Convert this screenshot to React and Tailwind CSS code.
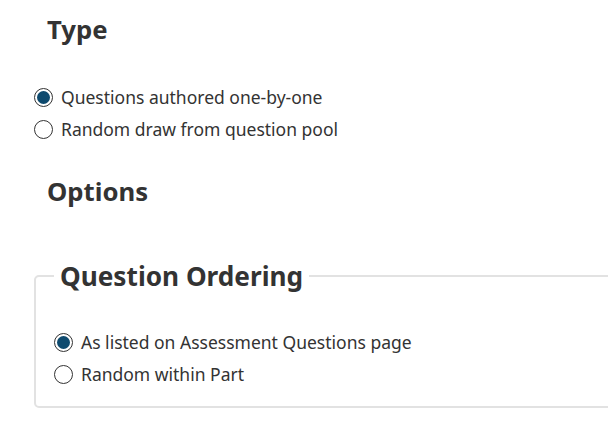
import React from "react";

function Radio({checked, label}) {
    return (
        <label className="flex items-center h-8 text-[17.5px] text-[#333]">
            <span className="flex items-center justify-center w-[19px] h-[19px] rounded-full border border-[#333] bg-white mr-[8px]">
                {checked && <span className="w-[13px] h-[13px] rounded-full bg-[#0e4a6e]"/>}
            </span>
            <span>{label}</span>
        </label>
    );
}

export default function App() {
    return (
        <div className="min-h-screen bg-white pl-[34px] pt-[10px] font-['Noto_Sans',sans-serif] text-[#333]">
            <h2 className="pl-[13px] text-[25.7px] font-bold leading-[40px]">Type</h2>
            <div className="mt-[31px]">
                <Radio checked label="Questions authored one-by-one"/>
                <Radio label="Random draw from question pool"/>
            </div>
            <h2 className="pl-[13px] mt-[27px] text-[25.7px] font-bold leading-[40px]">Options</h2>
            <fieldset className="mt-[46px] mr-[-20px] border-2 border-[#e2e2e2] rounded-[5px] pl-[18px] pb-[16px]">
                <legend className="px-[6px] ml-[0px] text-[26.2px] font-bold leading-[36px]">Question Ordering</legend>
                <div className="mt-[32px]">
                    <Radio checked label="As listed on Assessment Questions page"/>
                    <Radio label="Random within Part"/>
                </div>
            </fieldset>
        </div>
    );
}
